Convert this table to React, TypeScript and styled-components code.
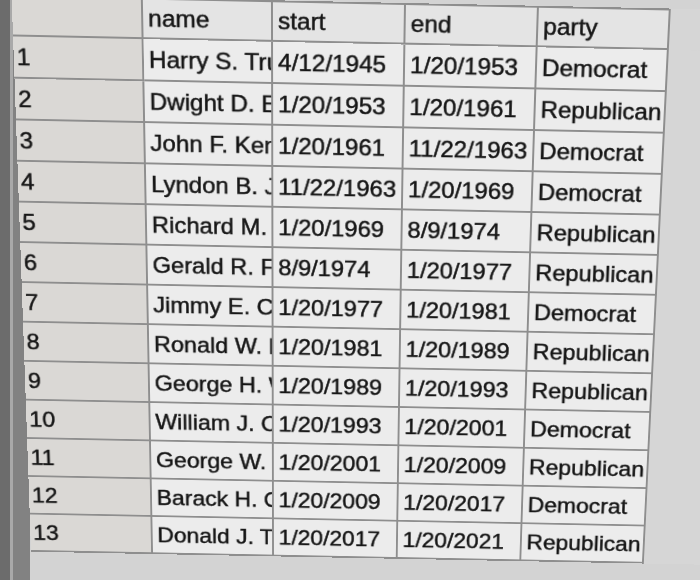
import * as React from 'react';
import styled, { createGlobalStyle } from 'styled-components';

const GlobalStyle = createGlobalStyle`
  html, body {
    margin: 0;
    padding: 0;
    overflow: hidden;
  }
  body {
    font-family: 'Liberation Sans', Arial, sans-serif;
  }
`;

type President = {
  name: string;
  start: string;
  end: string;
  party: string;
};

const presidents: President[] = [
  { name: 'Harry S. Truman', start: '4/12/1945', end: '1/20/1953', party: 'Democrat' },
  { name: 'Dwight D. Eisenhower', start: '1/20/1953', end: '1/20/1961', party: 'Republican' },
  { name: 'John F. Kennedy', start: '1/20/1961', end: '11/22/1963', party: 'Democrat' },
  { name: 'Lyndon B. Johnson', start: '11/22/1963', end: '1/20/1969', party: 'Democrat' },
  { name: 'Richard M. Nixon', start: '1/20/1969', end: '8/9/1974', party: 'Republican' },
  { name: 'Gerald R. Ford', start: '8/9/1974', end: '1/20/1977', party: 'Republican' },
  { name: 'Jimmy E. Carter', start: '1/20/1977', end: '1/20/1981', party: 'Democrat' },
  { name: 'Ronald W. Reagan', start: '1/20/1981', end: '1/20/1989', party: 'Republican' },
  { name: 'George H. W. Bush', start: '1/20/1989', end: '1/20/1993', party: 'Republican' },
  { name: 'William J. Clinton', start: '1/20/1993', end: '1/20/2001', party: 'Democrat' },
  { name: 'George W. Bush', start: '1/20/2001', end: '1/20/2009', party: 'Republican' },
  { name: 'Barack H. Obama', start: '1/20/2009', end: '1/20/2017', party: 'Democrat' },
  { name: 'Donald J. Trump', start: '1/20/2017', end: '1/20/2021', party: 'Republican' },
];

const columns = ['name', 'start', 'end', 'party'];

const Screen = styled.div`
  width: 700px;
  height: 580px;
  overflow: hidden;
  display: flex;
  padding-left: 12px;
  box-sizing: border-box;
  background: linear-gradient(
    to right,
    #6c6c6c 0,
    #6c6c6c 10px,
    #a9a9a9 10px,
    #a9a9a9 13px,
    #828282 13px,
    #828282 30px,
    #d3d3d3 30px
  );
`;

// photo of a monitor: the sheet leans back and is turned a little
const Sheet = styled.div`
  flex: none;
  display: grid;
  grid-template-columns: 131px 130px 133px 133px 132px 80px;
  grid-template-rows: 42px repeat(13, 43px);
  align-self: flex-start;
  margin-top: 4px;
  transform-origin: 441px 0;
  transform: perspective(800px) rotateX(-5.8deg) rotate(1.2deg);
`;

const Cell = styled.div<{ $head?: boolean; $filler?: boolean }>`
  box-sizing: border-box;
  display: flex;
  align-items: center;
  padding: 0 0 0 ${(p) => (p.$head ? '3px' : '5px')};
  overflow: hidden;
  white-space: nowrap;
  font-size: 24.5px;
  color: #161616;
  -webkit-text-stroke: 0.5px #161616;
  background: ${(p) => (p.$filler ? '#d6d6d6' : p.$head ? '#dad8d5' : '#ececec')};
  border-right: ${(p) => (p.$filler ? 'none' : '2px solid #8e8e8e')};
  border-bottom: ${(p) => (p.$filler ? 'none' : '2px solid #8e8e8e')};
`;

const HeaderCell = styled(Cell)`
  background: ${(p) => (p.$head ? '#dad8d5' : '#e4e4e4')};
  border-top: 2px solid #8e8e8e;
`;

const App: React.FC = () => (
  <Screen>
    <GlobalStyle />
    <Sheet>
      <HeaderCell $head />
      {columns.map((c) => (
        <HeaderCell key={c}>{c}</HeaderCell>
      ))}
      <Cell $filler />
      {presidents.map((p, i) => (
        <React.Fragment key={p.name}>
          <Cell $head>{i + 1}</Cell>
          <Cell>{p.name}</Cell>
          <Cell>{p.start}</Cell>
          <Cell>{p.end}</Cell>
          <Cell>{p.party}</Cell>
          <Cell $filler />
        </React.Fragment>
      ))}
    </Sheet>
  </Screen>
);

export default App;
